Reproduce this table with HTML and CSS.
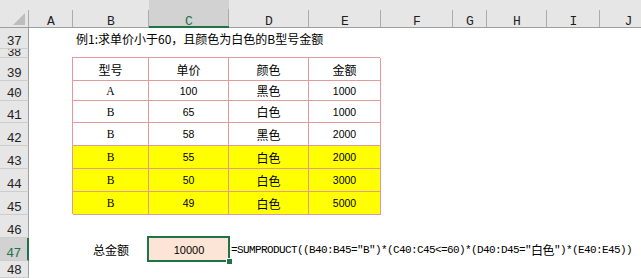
FILE: index.html
```html
<!DOCTYPE html>
<html lang="zh">
<head>
<meta charset="utf-8">
<title>SUMPRODUCT</title>
<link rel="stylesheet" href="styles.css">
</head>
<body>
<div class="sheet">
  <div class="corner"><svg width="28" height="27" viewBox="0 0 28 27"><polygon points="25,13 25,25 13,25" fill="#bdbdbd"/></svg></div>
  <div class="colhead">A</div>
  <div class="colhead">B</div>
  <div class="colhead active">C</div>
  <div class="colhead">D</div>
  <div class="colhead">E</div>
  <div class="colhead">F</div>
  <div class="colhead">G</div>
  <div class="colhead">H</div>
  <div class="colhead">I</div>
  <div class="colhead">J</div>

  <div class="rowhead">37</div>
  <div class="rowhead short">38</div>
  <div class="rowhead">39</div>
  <div class="rowhead">40</div>
  <div class="rowhead">41</div>
  <div class="rowhead">42</div>
  <div class="rowhead">43</div>
  <div class="rowhead">44</div>
  <div class="rowhead">45</div>
  <div class="rowhead">46</div>
  <div class="rowhead active">47</div>
  <div class="rowhead">48</div>

  <div class="title">例1:求单价小于60，且颜色为白色的B型号金额</div>

  <div class="table">
    <div>型号</div><div>单价</div><div>颜色</div><div>金额</div>
    <div class="ser">A</div><div class="num">100</div><div>黑色</div><div class="num">1000</div>
    <div class="ser">B</div><div class="num">65</div><div>白色</div><div class="num">1000</div>
    <div class="ser">B</div><div class="num">58</div><div>黑色</div><div class="num">2000</div>
    <div class="ser y">B</div><div class="num y">55</div><div class="y">白色</div><div class="num y">2000</div>
    <div class="ser y">B</div><div class="num y">50</div><div class="y">白色</div><div class="num y">3000</div>
    <div class="ser y">B</div><div class="num y">49</div><div class="y">白色</div><div class="num y">5000</div>
  </div>

  <div class="label">总金额</div>
  <div class="total">10000<div class="sel"></div><div class="handle"></div></div>
  <div class="formula">=SUMPRODUCT((B40:B45="B")*(C40:C45&lt;=60)*(D40:D45="<span class="cjk">白色</span>")*(E40:E45))</div>
</div>
</body>
</html>
```

FILE: styles.css
```css
* { box-sizing: border-box; margin: 0; padding: 0; }
html, body { width: 641px; height: 278px; overflow: hidden; background: #fff; }
body { font-family: "Noto Sans CJK SC", "Noto Sans", sans-serif; color: #000; }

.sheet {
  display: grid;
  width: 657px;
  height: 278px;
  grid-template-columns: 29px 44px 76px 80px 80px 72px 72px 34px 60px 53px 57px;
  grid-template-rows: 28px 21px 9px 23px 20px 22px 23px 23px 23px 23px 23px 23px 17px;
}

.corner {
  grid-area: 1 / 1;
  background: #e6e6e6 linear-gradient(#ababab, #ababab) right bottom / 1px 17px no-repeat;
  border-bottom: 1px solid #9e9e9e;
}
.corner svg { display: block; }

.colhead {
  grid-row: 1;
  background: #e6e6e6 linear-gradient(#ababab, #ababab) right bottom / 1px 17px no-repeat;
  border-bottom: 1px solid #9e9e9e;
  display: flex;
  align-items: flex-end;
  justify-content: center;
  font: 13px/11px "Liberation Mono", monospace;
  color: #1f1f1f;
}
.colhead.active {
  background-color: #d2d2d2;
  border-bottom: 2px solid #217346;
  line-height: 9px;
  color: #217346;
}

.rowhead {
  grid-column: 1;
  background: #e6e6e6;
  border-right: 1px solid #9e9e9e;
  border-bottom: 1px solid #cdcdcd;
  display: flex;
  align-items: flex-end;
  justify-content: center;
  font: 13px/13px "Liberation Mono", monospace;
  letter-spacing: -0.5px;
  color: #1f1f1f;
  overflow: hidden;
}
.rowhead.short { align-items: flex-start; line-height: 8px; font-size: 12px; }
.rowhead.active {
  background: #d2d2d2;
  border-right: 2px solid #217346;
  color: #217346;
}

.title {
  grid-area: 2 / 3 / 3 / 12;
  display: flex;
  align-items: center;
  padding-left: 3px;
  font-size: 12px;
  white-space: nowrap;
}

.table {
  grid-area: 4 / 3 / 11 / 7;
  display: grid;
  grid-template-columns: 76px 80px 80px 72px;
  grid-template-rows: 23px 20px 22px 23px 23px 23px 23px;
  box-shadow: -1px -1px 0 #e29a9a;
}
.table > div {
  border-right: 1px solid #e29a9a;
  border-bottom: 1px solid #e29a9a;
  display: flex;
  align-items: center;
  justify-content: center;
  font-size: 12px;
  white-space: nowrap;
}
.table > .ser { font: 11.5px "Liberation Serif", serif; }
.table > .num { font: 10.5px "Liberation Sans", sans-serif; }
.table > .y { background: #ffff00; }

.label {
  grid-area: 12 / 3;
  display: flex;
  align-items: center;
  justify-content: center;
  font-size: 12px;
}
.total {
  grid-area: 12 / 4;
  position: relative;
  background: #fce4d6;
  display: flex;
  align-items: center;
  justify-content: center;
  font: 11px "Liberation Sans", sans-serif;
}
.sel {
  position: absolute;
  top: -2px;
  left: -2px;
  right: -1px;
  bottom: -1px;
  border: 2px solid #217346;
}
.handle {
  position: absolute;
  left: 77px;
  top: 20px;
  width: 6px;
  height: 6px;
  background: #217346;
  border-top: 1px solid #fff;
  border-left: 1px solid #fff;
}
.formula {
  grid-area: 12 / 5 / 13 / 12;
  display: flex;
  align-items: center;
  padding-left: 2px;
  font: 11px "Liberation Mono", "Noto Sans CJK SC", monospace;
  letter-spacing: -0.6px;
  white-space: nowrap;
}
.formula .cjk { font: 12px "Noto Sans CJK SC", sans-serif; letter-spacing: -0.6px; }
```
